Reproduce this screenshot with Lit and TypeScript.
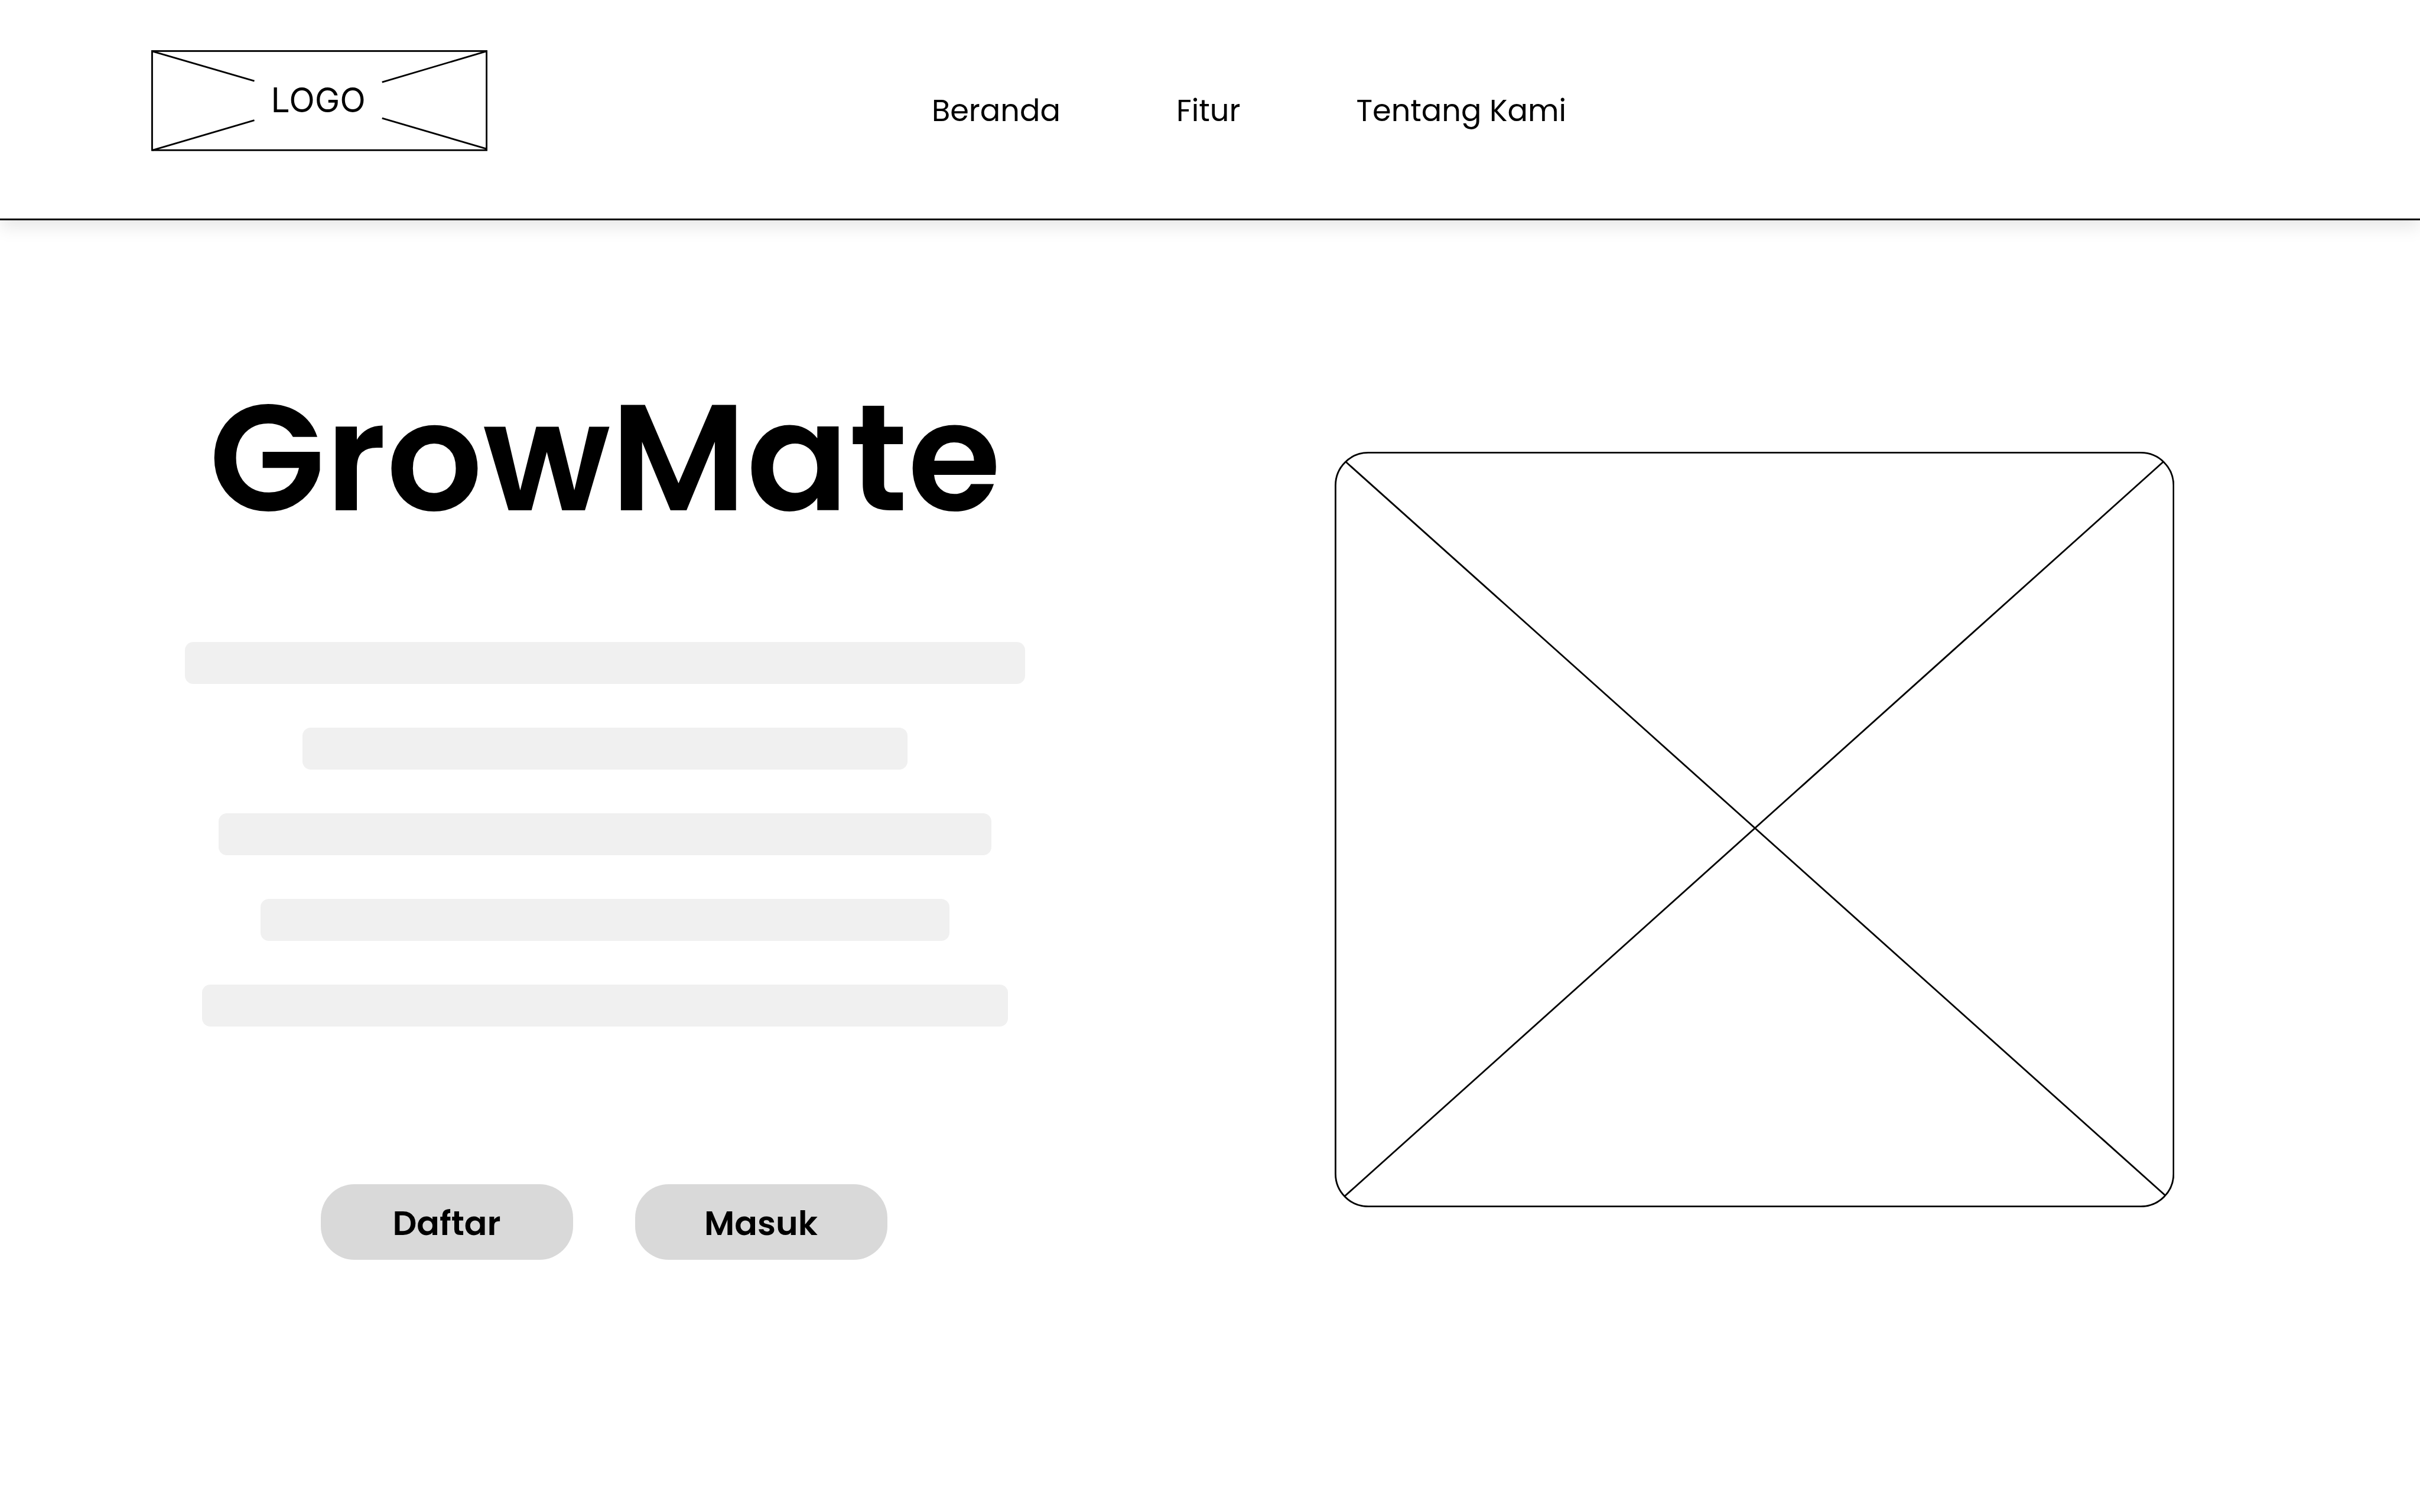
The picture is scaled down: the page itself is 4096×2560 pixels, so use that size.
import { LitElement, html, css } from "lit";
import { customElement } from "lit/decorators.js";

@customElement("site-header")
export class SiteHeader extends LitElement {
  static styles = css`
    :host {
      display: block;
    }
    .bar {
      display: grid;
      grid-template-columns: 38.5% 1fr;
      align-items: center;
      min-height: 370px;
      background: #fff;
      border-bottom: 3px solid #000;
      box-shadow: 0 11px 28px rgba(0, 0, 0, 0.1);
    }
    .logo {
      display: grid;
      align-self: start;
      place-items: center;
      width: 569px;
      margin: 85px 0 0 16.25%;
      color: #000;
      text-decoration: none;
    }
    .logo-frame,
    .logo-text {
      grid-area: 1 / 1;
    }
    .logo-frame {
      display: block;
      width: 100%;
    }
    .logo-text {
      padding-right: 4px;
      font: 400 57px/72px Inter, "Liberation Sans", sans-serif;
    }
    .nav {
      display: flex;
      gap: 196px;
      padding-top: 4px;
    }
    .link {
      font: 400 51px/72px Poppins, Inter, "Liberation Sans", sans-serif;
      color: #000;
      text-decoration: none;
    }
  `;

  private links = ["Beranda", "Fitur", "Tentang Kami"];

  render() {
    return html`
      <header class="bar">
        <a class="logo" href="#">
          <svg class="logo-frame" viewBox="0 0 600 180" fill="none" stroke="#000" stroke-width="3" aria-hidden="true">
            <rect x="1.5" y="1.5" width="597" height="177" />
            <path d="M2 2 184 55M2 178.500 184 125M598 2 412 57M598 176 412 121.500" />
          </svg>
          <span class="logo-text">LOGO</span>
        </a>
        <nav class="nav">
          ${this.links.map((label) => html`<a class="link" href="#">${label}</a>`)}
        </nav>
      </header>
    `;
  }
}

@customElement("hero-section")
export class HeroSection extends LitElement {
  static styles = css`
    :host {
      display: block;
    }
    .hero {
      display: grid;
      grid-template-columns: 1fr 1fr;
      padding: 242px 0;
    }
    .intro {
      display: flex;
      flex-direction: column;
      align-items: center;
    }
    .title {
      margin: 0;
      font: 600 256px/320px Poppins, Inter, "Liberation Sans", sans-serif;
      color: #000;
    }
    .lines {
      display: flex;
      flex-direction: column;
      align-items: center;
      gap: 74px;
      width: 69.4%;
      margin-top: 152px;
    }
    .line {
      height: 71px;
      border-radius: 14px;
      background: #f0f0f0;
    }
    .actions {
      display: flex;
      gap: 105px;
      margin-top: 267px;
      padding-right: 4px;
    }
    .button {
      width: 427px;
      height: 128px;
      padding: 4px 0 0;
      border: 0;
      border-radius: 57px;
      background: #d9d9d9;
      font: 600 57px/72px Poppins, Inter, "Liberation Sans", sans-serif;
      color: #000;
    }
    .picture {
      width: 69.4%;
      margin: 150px 0 0 10.3%;
    }
    .frame {
      display: block;
      width: 100%;
    }
  `;

  private lineWidths = [100, 72, 92, 82, 96];

  render() {
    return html`
      <main class="hero">
        <section class="intro">
          <h1 class="title">GrowMate</h1>
          <div class="lines">
            ${this.lineWidths.map((w) => html`<div class="line" style="width:${w}%"></div>`)}
          </div>
          <div class="actions">
            <button class="button" type="button">Daftar</button>
            <button class="button" type="button">Masuk</button>
          </div>
        </section>
        <div class="picture">
          <svg class="frame" viewBox="0 0 1500 1350" fill="none" stroke="#000" stroke-width="3" aria-hidden="true">
            <rect x="1.5" y="1.5" width="1497" height="1347" rx="58.5" />
            <path d="M20 18 1484 1329M1480 18 18 1330" />
          </svg>
        </div>
      </main>
    `;
  }
}

@customElement("app-root")
export class AppRoot extends LitElement {
  static styles = css`
    :host {
      display: block;
    }
    .page {
      min-height: 100vh;
      background: #fff;
    }
  `;

  render() {
    return html`
      <div class="page">
        <site-header></site-header>
        <hero-section></hero-section>
      </div>
    `;
  }
}
